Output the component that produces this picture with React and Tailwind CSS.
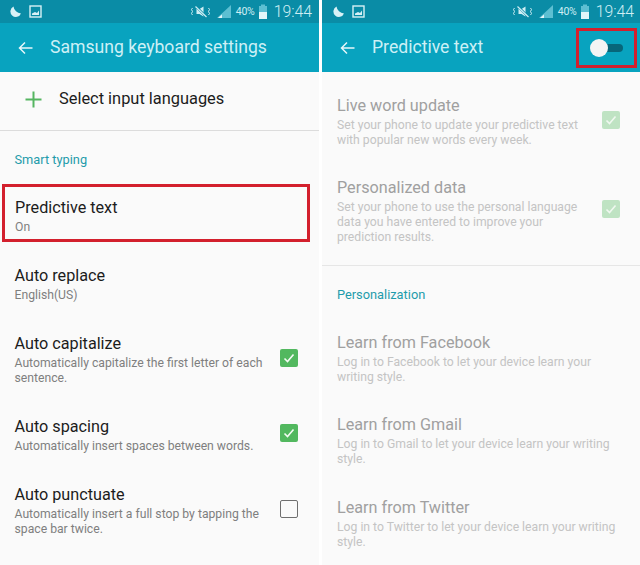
const font = { fontFamily: '"Roboto", sans-serif' };

function Status({ pl, pr }) {
  return (
    <div className={`h-[23px] bg-[#0a8ca6] flex items-center text-[#cfeef4] ${pl} ${pr}`}>
      <svg width="13" height="13" viewBox="0 0 13 13" className="mr-[7px]"><path d="M4.5 1.5 A5.5 5.5 0 1 0 12 8.5 A8 8 0 0 1 4.5 1.5Z" fill="#d8f1f6" /></svg>
      <svg width="13" height="13" viewBox="0 0 13 13"><rect x="1" y="1" width="11" height="11" fill="none" stroke="#d8f1f6" strokeWidth="1.4" /><path d="M3 10 L3 8.5 L6 7 L8 8 L10 5.5 L10 10Z" fill="#d8f1f6" /></svg>
      <div className="flex-1" />
      <svg width="21" height="13" viewBox="0 0 20 13" className="mr-[6px]">
        <path d="M6 4 H9 L13 1.5 V11.5 L9 9 H6Z" fill="#cfeef4" />
        <path d="M5 1 L16 12" stroke="#0a8ca6" strokeWidth="2.4" />
        <path d="M5 1.5 L16 12" stroke="#cfeef4" strokeWidth="1.2" />
        <path d="M2 3 L1 4.5 L2 6.5 L1 8.5 L2 10 M18 3 L19 4.5 L18 6.5 L19 8.5 L18 10" fill="none" stroke="#cfeef4" strokeWidth="1" />
      </svg>
      <svg width="15" height="15" viewBox="0 0 15 15" className="mr-[4px]">
        <path d="M0 14 L14 1 V14Z" fill="#5dbfd2" />
        <path d="M1 14 L5 10.5 V14Z" fill="#e4f6f9" />
      </svg>
      <span className="text-[10.5px] tracking-[-0.2px] mr-[3px]">40%</span>
      <svg width="10" height="16" viewBox="0 0 10 16" className="mr-[6px]">
        <rect x="3" y="0.5" width="4" height="2" fill="#5dbfd2" />
        <rect x="1" y="2" width="8" height="6" fill="#5dbfd2" />
        <rect x="1" y="8" width="8" height="7" fill="#e4f6f9" />
      </svg>
      <span className="text-[15.8px] leading-none font-light">19:44</span>
    </div>
  );
}

function Header({ title, pl, children }) {
  return (
    <div className={`h-[49px] bg-[#08a3bf] flex items-center text-[#cdf0f6] ${pl}`}>
      <svg width="15" height="14" viewBox="0 0 15 14" className="mr-[17px] shrink-0">
        <path d="M14.5 7 H1.5 M7 1.5 L1.5 7 L7 12.5" fill="none" stroke="#e6f7fa" strokeWidth="1.5" />
      </svg>
      <span className="text-[17.6px]">{title}</span>
      {children}
    </div>
  );
}

function Check({ on, faded }) {
  if (!on) return <div className="w-[18px] h-[18px] rounded-[2px] border-[1.5px] border-[#6f6f6f]" />;
  return (
    <div className={`w-[18px] h-[18px] rounded-[2px] flex items-center justify-center ${faded ? "bg-[#bfe3c3]" : "bg-[#52b85f]"}`}>
      <svg width="14" height="14" viewBox="0 0 14 14"><path d="M2.5 7.5 L5.5 10.5 L11.5 3.5" fill="none" stroke={faded ? "#f0f8f0" : "#f4fbf4"} strokeWidth="1.6" /></svg>
    </div>
  );
}

function Row({ title, sub, check, on, className = "", faded, pl = "pl-[14.5px]", pr = "pr-[21px]" }) {
  return (
    <div className={`flex items-center ${pl} ${pr} ${className}`}>
      <div className="flex-1 min-w-0">
        <div className={`text-[16.2px] leading-[20px] ${faded ? "text-[#a0a0a0]" : "text-[#1c1c1c]"}`}>{title}</div>
        <div className={`text-[12.2px] leading-[15px] mt-[2px] ${faded ? "text-[#c4c4c4]" : "text-[#7f7f7f]"}`}>{sub}</div>
      </div>
      {check && <div className="shrink-0 mb-[5px]"><Check on={on} faded={faded} /></div>}
    </div>
  );
}

export default function App() {
  return (
    <div className="w-[640px] h-[565px] flex bg-white overflow-hidden" style={font}>
      <div className="w-[319px] shrink-0 bg-[#fafafa] flex flex-col">
        <Status pl="pl-[9px]" pr="pr-[7px]" />
        <Header title="Samsung keyboard settings" pl="pl-[18px]" />
        <div className="h-[59px] flex items-center border-b border-[#dcdcdc] pl-[25px] pb-[4px]">
          <svg width="17" height="17" viewBox="0 0 17 17" className="mr-[17px]"><path d="M8.5 0.5 V16.5 M0.5 8.5 H16.5" stroke="#55b561" strokeWidth="2" /></svg>
          <span className="text-[16.4px] text-[#1c1c1c]">Select input languages</span>
        </div>
        <div className="pl-[14.5px] pt-[21px] text-[12.8px] leading-[15px] text-[#1f9cab]">Smart typing</div>
        <div className="h-[58px] mt-[17px] mr-[9px] ml-[2px] border-[3px] border-[#d3202d] flex flex-col pt-[11px] pl-[10px]">
          <div className="text-[16.2px] leading-[20px] text-[#1c1c1c]">Predictive text</div>
          <div className="text-[12.2px] leading-[15px] mt-[2px] text-[#7f7f7f]">On</div>
        </div>
        <Row title="Auto replace" sub="English(US)" className="mt-[24px]" />
        <Row title="Auto capitalize" sub={<>Automatically capitalize the first letter of each<br />sentence.</>} check on className="mt-[31px]" />
        <Row title="Auto spacing" sub="Automatically insert spaces between words." check on className="mt-[31px]" />
        <Row title="Auto punctuate" sub={<>Automatically insert a full stop by tapping the<br />space bar twice.</>} check className="mt-[31px]" />
      </div>
      <div className="w-[3px] shrink-0 bg-white" />
      <div className="flex-1 min-w-0 bg-[#fafafa] flex flex-col">
        <Status pl="pl-[10px]" pr="pr-[6px]" />
        <Header title="Predictive text" pl="pl-[18px]">
          <div className="flex-1" />
          <div className="relative w-[61px] h-[40px] mr-[3px] border-[3px] border-[#d3202d] flex items-center">
            <div className="absolute left-[20px] w-[24px] h-[8px] rounded-full bg-[#07667a]" />
            <div className="absolute left-[11px] w-[18px] h-[18px] rounded-full bg-[#f4f4f4]" />
          </div>
        </Header>
        <Row faded check on pl="pl-[15px]" pr="pr-[20px]" className="mt-[24px]" title="Live word update" sub={<>Set your phone to update your predictive text<br />with popular new words every week.</>} />
        <Row faded check on pl="pl-[15px]" pr="pr-[20px]" className="mt-[30px]" title="Personalized data" sub={<>Set your phone to use the personal language<br />data you have entered to improve your<br />prediction results.</>} />
        <div className="border-t border-[#e6e6e6] mt-[20px] pl-[15px] pt-[21px] text-[12.8px] leading-[15px] text-[#1f9cab]">Personalization</div>
        <Row faded pl="pl-[15px]" className="mt-[31px]" title="Learn from Facebook" sub={<>Log in to Facebook to let your device learn your<br />writing style.</>} />
        <Row faded pl="pl-[15px]" className="mt-[30px]" title="Learn from Gmail" sub={<>Log in to Gmail to let your device learn your writing<br />style.</>} />
        <Row faded pl="pl-[15px]" className="mt-[31px]" title="Learn from Twitter" sub={<>Log in to Twitter to let your device learn your writing<br />style.</>} />
      </div>
    </div>
  );
}
